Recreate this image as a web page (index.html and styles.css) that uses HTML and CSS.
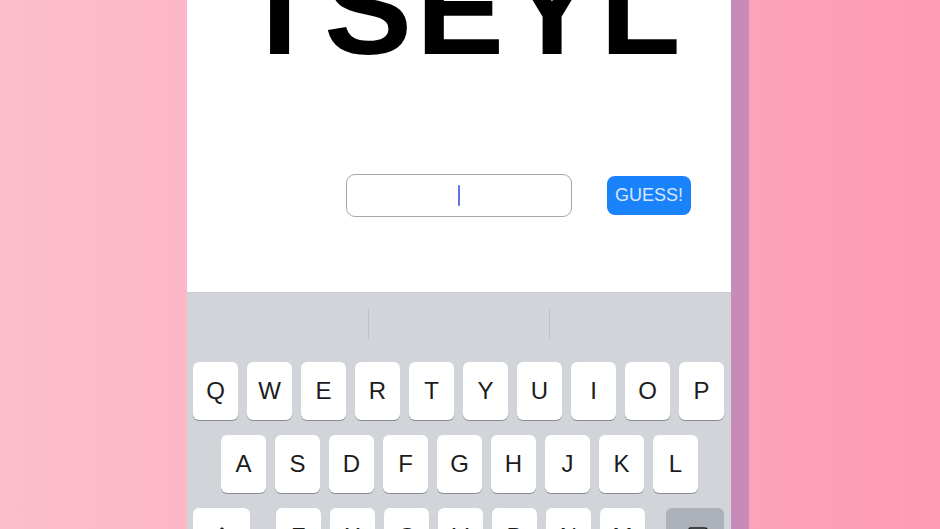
FILE: index.html
```html
<!DOCTYPE html>
<html lang="en">
<head>
  <meta charset="UTF-8" />
  <meta name="viewport" content="width=device-width, initial-scale=1.0" />
  <title>Guess the word</title>
  <link rel="stylesheet" href="styles.css">
</head>
<body>
  <div class="phone">
    <h1 class="scramble">TSEYL</h1>
    <form class="guess-row">
      <div class="guess-input"><span class="caret"></span></div>
      <button type="button" class="guess-btn">GUESS!</button>
    </form>

    <div class="keyboard">
      <div class="suggestions">
        <span></span><span class="divider"></span><span></span><span class="divider"></span><span></span>
      </div>
      <div class="row">
        <div class="key">Q</div><div class="key">W</div><div class="key">E</div><div class="key">R</div><div class="key">T</div>
        <div class="key">Y</div><div class="key">U</div><div class="key">I</div><div class="key">O</div><div class="key">P</div>
      </div>
      <div class="row row-mid">
        <div class="key">A</div><div class="key">S</div><div class="key">D</div><div class="key">F</div><div class="key">G</div>
        <div class="key">H</div><div class="key">J</div><div class="key">K</div><div class="key">L</div>
      </div>
      <div class="row row-bottom">
        <div class="key key-shift">
          <svg width="22" height="22" viewBox="0 0 22 22"><path d="M11 2 L2 11 H6.5 V19 H15.5 V11 H20 Z" fill="none" stroke="#1c1c1c" stroke-width="1.6" stroke-linejoin="round"/></svg>
        </div>
        <div class="letters">
          <div class="key">Z</div><div class="key">X</div><div class="key">C</div><div class="key">V</div>
          <div class="key">B</div><div class="key">N</div><div class="key">M</div>
        </div>
        <div class="key key-back">
          <svg width="28" height="22" viewBox="0 0 28 22"><path d="M9 2 H24 Q26 2 26 4 V18 Q26 20 24 20 H9 L1.5 11 Z" fill="none" stroke="#1c1c1c" stroke-width="1.6" stroke-linejoin="round"/><path d="M13 7 L20 14 M20 7 L13 14" stroke="#1c1c1c" stroke-width="1.6" stroke-linecap="round"/></svg>
        </div>
      </div>
    </div>
  </div>
  <div class="edge"></div>
</body>
</html>
```

FILE: styles.css
```css
html, body {
  height: 100%;
}
body {
  margin: 0;
  padding-left: 187px;
  display: flex;
  overflow: hidden;
  font-family: 'Liberation Sans', Arial, sans-serif;
  background: linear-gradient(90deg, #fcbecb, #fe9bb7);
}
.phone {
  width: 544px;
  height: 100%;
  background: #fff;
  overflow: hidden;
}
.edge {
  width: 18px;
  height: 100%;
  background: #c68bb8;
}
.scramble {
  margin: -57px 0 0;
  padding-left: 6px;
  font-size: 132px;
  line-height: 132px;
  font-weight: 700;
  letter-spacing: 4px;
  text-align: center;
  color: #000;
}
.guess-row {
  display: flex;
  align-items: center;
  justify-content: flex-end;
  gap: 35px;
  margin: 99px 0 0;
  padding-right: 40px;
}
.guess-input {
  width: 224px;
  height: 41px;
  border: 1.5px solid #a8a8a8;
  border-radius: 9px;
  display: flex;
  align-items: center;
  justify-content: center;
}
.caret {
  width: 2px;
  height: 21px;
  background: #5f73e3;
  border-radius: 1px;
}
.guess-btn {
  width: 84px;
  height: 39px;
  border: none;
  border-radius: 8px;
  background: #1a82fb;
  color: #d9e8ff;
  font-family: inherit;
  font-size: 18px;
  padding: 0;
}
.keyboard {
  margin-top: 75px;
  background: #d1d4d9;
  border-top: 1px solid #c9cbd0;
  padding: 0 7px 20px 6px;
}
.suggestions {
  height: 61px;
  display: flex;
  align-items: center;
  margin: 0 -7px 0 -6px;
}
.suggestions span {
  flex: 1;
}
.suggestions .divider {
  flex: 0 0 1px;
  height: 30px;
  background: #bcc0c6;
}
.row {
  display: flex;
  gap: 9px;
  margin-top: 8px;
}
.row + .row {
  margin-top: 15px;
}
.row-mid {
  padding-left: 28px;
}
.key {
  width: 45px;
  height: 58px;
  flex: none;
  background: #fff;
  border-radius: 6px;
  box-shadow: 0 1px 0 #8b8d92;
  display: flex;
  align-items: center;
  justify-content: center;
  font-size: 24px;
  color: #1c1c1c;
}
.row-bottom {
  gap: 0;
}
.letters {
  display: flex;
  gap: 9px;
  margin-left: 26px;
}
.key-shift {
  width: 57px;
}
.key-back {
  width: 58px;
  margin-left: auto;
  background: #acb1ba;
}
```
